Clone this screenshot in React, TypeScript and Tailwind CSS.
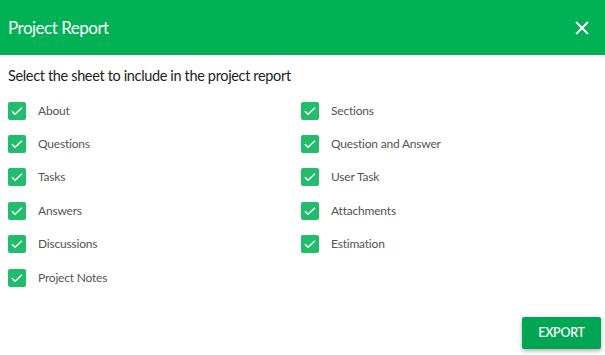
import React, { useState } from 'react'

const LEFT = ['About', 'Questions', 'Tasks', 'Answers', 'Discussions', 'Project Notes']
const RIGHT = ['Sections', 'Question and Answer', 'User Task', 'Attachments', 'Estimation']

const Check = ({ label, checked, onToggle }: { label: string; checked: boolean; onToggle: () => void }) => (
  <label className="flex items-center h-[33.4px] cursor-pointer select-none" onClick={onToggle}>
    <span
      className={
        checked
          ? 'w-[18px] h-[18px] rounded-[2px] bg-[#22bd6c] flex items-center justify-center shrink-0'
          : 'w-[18px] h-[18px] rounded-[2px] border-2 border-[#999] shrink-0'
      }
    >
      {checked && (
        <svg viewBox="0 0 24 24" className="w-[16px] h-[16px]" fill="none" stroke="white" strokeWidth="2.2">
          <path d="M4.5 12.5l4.5 4.5L19.5 7" />
        </svg>
      )}
    </span>
    <span className="ml-3 text-[12px] tracking-[-0.2px] text-[#555]">{label}</span>
  </label>
)

export default function App() {
  const [checked, setChecked] = useState<Record<string, boolean>>(
    Object.fromEntries([...LEFT, ...RIGHT].map((k) => [k, true]))
  )
  const toggle = (k: string) => setChecked((c) => ({ ...c, [k]: !c[k] }))

  return (
    <div className="w-[605px] h-[355px] bg-white flex flex-col" style={{ fontFamily: '"Source Sans Pro", Lato, "Noto Sans", sans-serif' }}>
      {/* header */}
      <div className="h-[55px] bg-[#00b155] flex items-center justify-between pl-2 pr-[14px] shrink-0">
        <h2 className="text-white text-[17px] tracking-[-0.5px]">Project Report</h2>
        <button className="text-white cursor-pointer" aria-label="close">
          <svg viewBox="0 0 24 24" className="w-[18px] h-[18px]" fill="none" stroke="white" strokeWidth="2.6" strokeLinecap="square">
            <path d="M5 5l14 14M19 5L5 19" />
          </svg>
        </button>
      </div>

      <div className="px-2 pt-[11px] flex flex-col">
        <p className="text-[14.5px] tracking-[-0.35px] text-[#222] leading-5">Select the sheet to include in the project report</p>
        <div className="grid grid-cols-[293px_1fr] mt-[8px]">
          <div className="flex flex-col">
            {LEFT.map((k) => (
              <Check key={k} label={k} checked={checked[k]} onToggle={() => toggle(k)} />
            ))}
          </div>
          <div className="flex flex-col">
            {RIGHT.map((k) => (
              <Check key={k} label={k} checked={checked[k]} onToggle={() => toggle(k)} />
            ))}
          </div>
        </div>
      </div>

      <div className="flex justify-end mt-auto mb-[6px] pr-1">
        <button className="w-[79px] h-[32px] bg-[#00a651] text-white text-[12.5px] font-semibold tracking-[-0.3px] rounded-[2px] shadow-[0_2px_4px_rgba(0,0,0,0.3)] cursor-pointer">
          EXPORT
        </button>
      </div>
    </div>
  )
}
